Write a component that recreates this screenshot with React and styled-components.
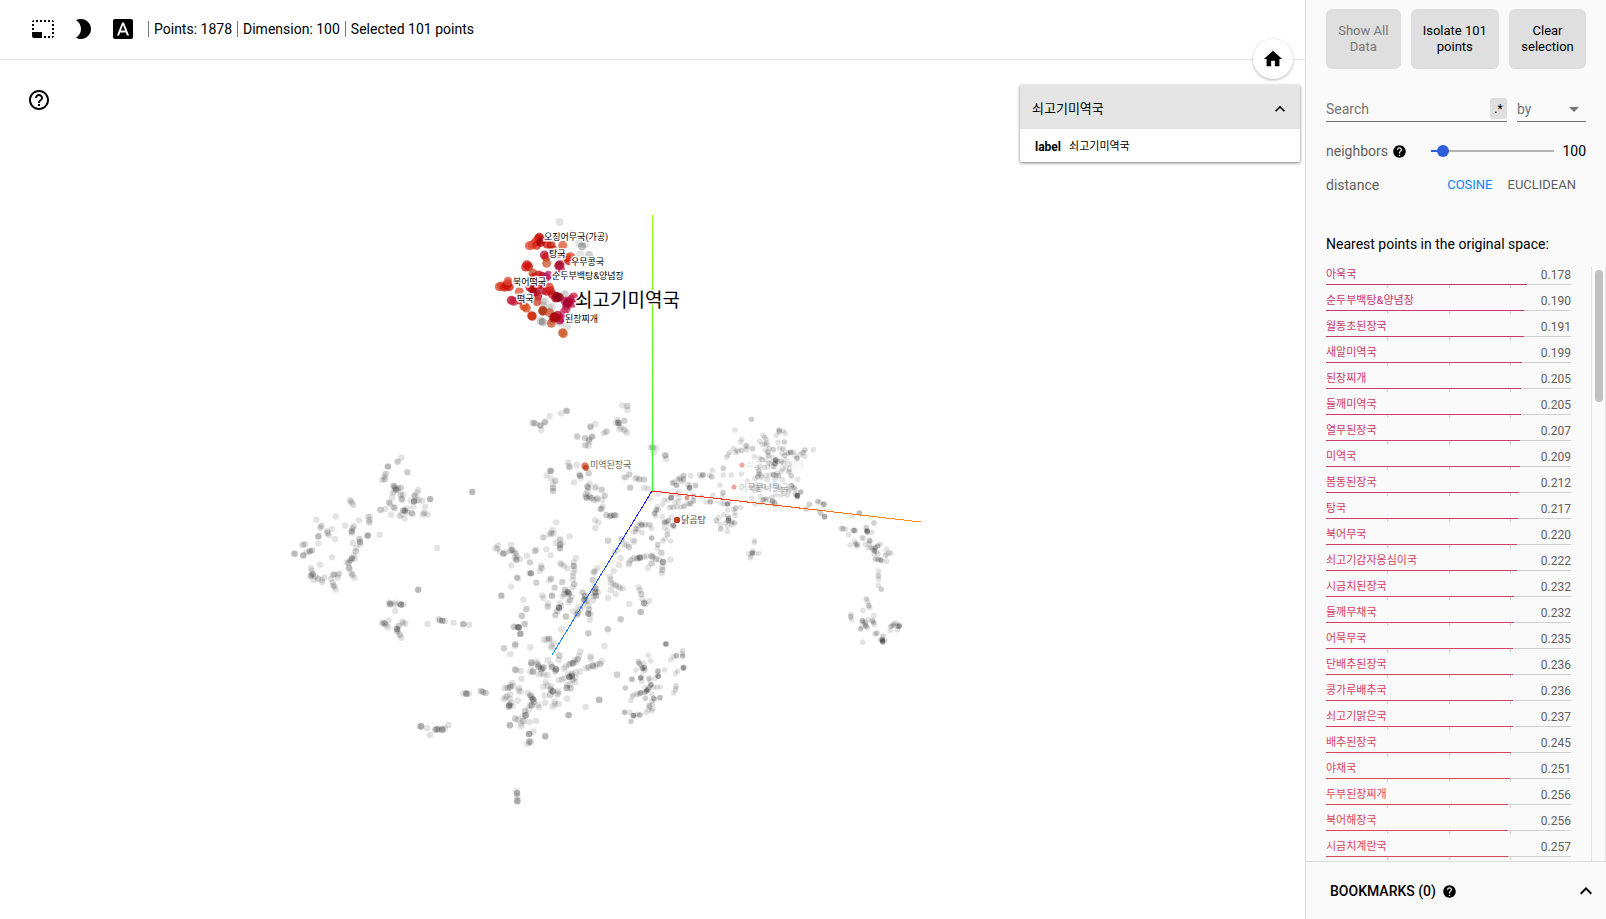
import React, { useState } from "react";
import styled, { createGlobalStyle } from "styled-components";
import {
  MdPhotoSizeSelectSmall,
  MdBrightness2,
  MdFontDownload,
  MdHelpOutline,
  MdHelp,
  MdHome,
  MdExpandLess,
  MdArrowDropDown,
} from "react-icons/md";

const GlobalStyle = createGlobalStyle`
  *, *::before, *::after { box-sizing: border-box; }
  body {
    margin: 0;
    background: #fff;
    color: #000;
    font: 14px/16px Roboto, "Noto Sans CJK KR", sans-serif;
  }
  button, input, select { font: inherit; color: inherit; }
`;

const Page = styled.div`
  display: grid;
  grid-template-columns: minmax(0, 1fr) 301px;
  height: 100vh;
`;

const Main = styled.main`
  position: relative;
  display: flex;
  flex-direction: column;
  min-height: 0;
`;

const Toolbar = styled.header`
  display: flex;
  align-items: center;
  height: 60px;
  padding: 0 0 2px 31px;
  border-bottom: 1px solid #e6e6e6;
`;

const Tools = styled.div`
  display: flex;
  gap: 16px;
  margin-right: 13px;
`;

const IconButton = styled.button`
  display: flex;
  padding: 0;
  border: 0;
  background: none;
  cursor: pointer;
  font-size: ${(p) => p.$size || 24}px;
`;

const Stat = styled.span`
  padding: 0 5px;
  border-left: 1px solid #777;
`;

const HelpButton = styled(IconButton)`
  position: absolute;
  top: 88px;
  left: 27px;
`;

const HomeButton = styled(IconButton)`
  position: absolute;
  top: 39px;
  right: 12px;
  width: 40px;
  height: 40px;
  align-items: center;
  justify-content: center;
  border-radius: 50%;
  background: #fff;
  box-shadow: 0 1px 3px rgba(0, 0, 0, 0.3);
`;

const InfoCard = styled.section`
  position: absolute;
  top: 85px;
  right: 5px;
  width: 280px;
  background: #fff;
  box-shadow: 0 1px 3px rgba(0, 0, 0, 0.5);
`;

const InfoHead = styled.div`
  display: flex;
  align-items: center;
  justify-content: space-between;
  height: 44px;
  padding: 3px 10px 0 12px;
  background: #e5e5e5;
  font-size: 13px;
`;

const InfoRow = styled.dl`
  display: flex;
  gap: 8px;
  margin: 0;
  padding: 10px 15px 7px;
  font-size: 12px;

  dt { font-weight: 700; }
  dd { margin: 0; font-size: 11px; }
`;

const Plot = styled.svg`
  display: block;
  flex: 1;
  width: 100%;
  min-height: 0;
`;

const PointLabel = styled.text`
  font-size: ${(p) => p.$size || 9}px;
  fill: #000;
  fill-opacity: ${(p) => p.$fade || 1};
  stroke: #fff;
  stroke-width: 3px;
  stroke-opacity: ${(p) => p.$fade || 0.9};
  paint-order: stroke;
`;

const Sidebar = styled.aside`
  display: flex;
  flex-direction: column;
  min-height: 0;
  border-left: 1px solid #dcdcdc;
  background: #fafafa;
`;

const Controls = styled.div`
  padding: 9px 20px 0;
`;

const Actions = styled.div`
  display: flex;
  gap: 10px;
`;

const ActionButton = styled.button`
  flex: 1 1 auto;
  height: 60px;
  padding: 0 10px;
  border: 0;
  border-radius: 6px;
  background: #dfdfdf;
  font-size: 13px;
  line-height: 16px;
  cursor: pointer;

  &:disabled { color: #777; cursor: default; }
`;

const SearchRow = styled.div`
  display: flex;
  gap: 10px;
  margin: 27px 0 12px;
`;

const Field = styled.div`
  display: flex;
  align-items: center;
  flex: ${(p) => p.$flex || "none"};
  width: ${(p) => p.$width || "auto"};
  min-width: 0;
  height: 26px;
  border-bottom: 1px solid #707070;
  color: #757575;
`;

const SearchInput = styled.input`
  flex: 1;
  min-width: 0;
  padding: 0;
  border: 0;
  outline: 0;
  background: none;

  &::placeholder { color: #757575; opacity: 1; }
`;

const RegexButton = styled.button`
  width: 17px;
  height: 21px;
  padding: 0;
  border: 0;
  border-radius: 3px;
  background: #dfdfdf;
  color: #000;
  font-size: 12px;
`;

const BySelect = styled.select`
  appearance: none;
  flex: 1;
  min-width: 0;
  padding: 0;
  border: 0;
  outline: 0;
  background: none;
`;

const OptionRow = styled.div`
  display: flex;
  align-items: center;
  height: 34px;
  color: #5f5f5f;
`;

const NeighborLabel = styled.label`
  margin-right: 4px;
`;

const Slider = styled.input`
  appearance: none;
  flex: 1;
  min-width: 0;
  height: 12px;
  margin: 0 2px 0 18px;
  background: linear-gradient(
      to right,
      transparent 6px,
      #2f5fd8 6px 18px,
      #b4b4b4 18px calc(100% - 6px),
      transparent 0
    )
    center / 100% 2px no-repeat;

  &::-webkit-slider-thumb {
    appearance: none;
    width: 12px;
    height: 12px;
    border-radius: 50%;
    background: #2f5fd8;
  }
`;

const SliderValue = styled.output`
  color: #000;
`;

const DistanceButton = styled.button`
  padding: 0;
  border: 0;
  margin-left: ${(p) => (p.$first ? "auto" : "15px")};
  margin-right: ${(p) => (p.$first ? 0 : "10px")};
  background: none;
  font-size: 13px;
  color: ${(p) => (p.$active ? "#0d84ff" : "#5f5f5f")};
`;

const ListTitle = styled.h2`
  margin: 34px 0 14px;
  font-size: 14px;
  font-weight: 400;
  line-height: 17px;
`;

const ListArea = styled.div`
  display: flex;
  flex: 1;
  min-height: 0;
`;

const NeighborList = styled.ul`
  flex: 1;
  margin: 0;
  padding: 0 20px;
  overflow-y: auto;
  scrollbar-width: none;
  list-style: none;
`;

const NeighborItem = styled.li`
  height: 26px;
  font-size: 12px;
`;

const NeighborText = styled.button`
  display: flex;
  align-items: center;
  justify-content: space-between;
  width: 100%;
  height: 17px;
  padding: 0 0 2px;
  border: 0;
  background: none;
  line-height: 14px;
  color: #5f5f5f;
  cursor: pointer;
`;

const NeighborName = styled.span`
  font-size: 11px;
`;

const Bar = styled.div`
  height: 1px;
  background: #d0d0d0;
`;

const BarFill = styled.div`
  height: 1px;
`;

const Ticks = styled.div`
  display: grid;
  grid-template-columns: repeat(4, 1fr);
  height: 3px;

  span + span { border-left: 1px solid #d0d0d0; }
`;

const ScrollTrack = styled.div`
  width: 15px;
  padding: 3px 2px 0 3px;
  border: solid #e4e4e4;
  border-width: 0 1px;
`;

const ScrollThumb = styled.div`
  width: 8px;
  height: 132px;
  border-radius: 4px;
  background: #c1c1c1;
`;

const Bookmarks = styled.footer`
  display: flex;
  align-items: center;
  gap: 6px;
  height: 58px;
  padding: 1px 8px 0 24px;
  border-top: 1px solid #dcdcdc;
  font-weight: 500;

  button { margin-left: auto; }
`;

const NEIGHBORS = [
  ["아욱국", 0.178],
  ["순두부백탕&양념장", 0.19],
  ["월동초된장국", 0.191],
  ["새알미역국", 0.199],
  ["된장찌개", 0.205],
  ["들깨미역국", 0.205],
  ["열무된장국", 0.207],
  ["미역국", 0.209],
  ["봄동된장국", 0.212],
  ["탕국", 0.217],
  ["북어무국", 0.22],
  ["쇠고기감자옹심이국", 0.222],
  ["시금치된장국", 0.232],
  ["들깨무채국", 0.232],
  ["어묵무국", 0.235],
  ["단배추된장국", 0.236],
  ["콩가루배추국", 0.236],
  ["쇠고기맑은국", 0.237],
  ["배추된장국", 0.245],
  ["야채국", 0.251],
  ["두부된장찌개", 0.256],
  ["북어해장국", 0.256],
  ["시금치계란국", 0.257],
];

const neighborColor = (d) => {
  const t = (d - 0.178) / 0.079;
  const mix = (a, b) => Math.round(a + (b - a) * t);
  return `rgb(${mix(196, 220)}, ${mix(52, 70)}, ${mix(112, 90)})`;
};

/* Each cluster: origin, point radius, and "x y [density]" entries in thirds of a unit. */
const CLUSTERS = [
  {
    x: 280, y: 440, r: 3.2,
    pts: `364 53,352 66,354 64,323 79 2,325 80,380 95,384 98,317 102 2,313 110,306 120,314 118 2,341 138 3,345 143 2,349 149 3,362 143 2,355 146,338 158,343 155,362 164 2,370 164,336 173,365 176 2,367 181,327 187 2,331 192,344 204 2,340 201,300 210,303 209,316 207,333 224,370 211 3,375 212 3,381 205,381 217,359 228,364 224,374 235,395 219 2,398 222,400 200,402 184 4,410 182,403 166 2,406 170,415 150,411 157,392 182,417 180,426 182,450 177 2,451 178,435 200,433 219 2,428 224,443 224,577 156 2,576 155,210 180,216 188,220 195,212 184,109 239,167 229,237 241,195 257,264 230,270 230,268 247 2,268 240,124 258 2,120 264,156 267,143 279 2,141 273,147 286,116 288 2,114 291,165 297,115 310,222 258 1,218 265 2,215 274 3,216 280,299 284,264 286 3,261 288,219 309,238 297 2,240 306 3,240 313,229 323,227 334 2,221 347,216 355 3,211 361 2,206 368 2,224 356,200 367,207 383 2,209 387,214 399,217 405 2,224 413,70 313,76 312,68 316,45 341 2,41 341,69 347 2,71 345,80 337,89 334 3,96 331 2,156 352,120 374,93 384,95 392,98 402 3,94 407 2,91 409,106 409,114 416 2,101 420,127 426,126 420,133 412,162 403 2,158 405,178 400,174 404,174 413,153 417,158 427,160 436 2,164 441,167 449,471 324,415 449 2,414 449,327 487,331 491 3,329 494,345 488,346 494,363 494 4,359 490,371 493,346 513,326 541,309 547,314 550 3,306 551,319 556,324 561,367 545,376 551,370 549,356 558 2,351 567 4,352 574 2,359 582,360 586,364 593,443 552,475 537,480 541 2,487 542 3,495 543,521 548,549 552 2,551 553,567 554`,
  },
  {
    x: 480, y: 390, r: 3.2,
    pts: `259 62 2,261 64,243 70,209 78,196 95 2,193 99,162 99 2,168 101,157 99,180 106 2,183 107,184 120,427 46,442 48 2,442 60,346 102,331 109 2,332 113,412 89,408 99,415 98 4,418 103,433 92 2,422 112,418 118,433 118,441 129,434 122,381 124,377 125,371 130,290 138,293 141,337 139 2,335 142,315 144 2,327 149 2,328 155,316 166 2,326 167,264 217,266 227,269 232 2,290 225,316 226,300 257 3,297 253,303 263,282 277,326 250 2,211 242 3,215 244,200 256,213 266,226 273 2,219 283,219 294 2,219 303 2,322 289 2,325 293 2,329 280,348 290,345 293,365 299 2,322 304,374 317 2,318 312,317 320 2,321 324 2,329 319 2,335 324 2,341 330,352 325 2,349 329,367 330,368 350,364 356 2,361 358,379 375 2,390 379 2,394 376 2,403 376 3,409 376,345 391,355 397,346 414,448 253 2,432 262,438 262,471 263,466 266,478 268 2,492 268 2,450 294,451 292,492 294,505 295,518 172 2,512 172,527 174,521 188,556 196 3,558 207,229 397,218 420,213 429 2,208 434,221 431,190 442 2,240 448 2,269 439,228 459,240 464 3,246 460 1,240 475 3,54 466,46 474,52 476,60 485,70 491 3,76 488,93 465,95 480 3,89 483,101 482 1,109 490,110 499,109 509 3,104 504,120 507,94 526,104 490,141 497,165 483 2,169 479,212 496,199 478,150 517 2,183 526,185 534 2,153 550 4,148 549,179 543,111 562 2,114 566,169 578 2,93 590,64 617 3,241 520,244 523,252 527,262 535,288 504,281 517,281 528 3,284 539,280 549,279 558,213 566 2,208 571,247 576 2,224 593 2,279 569,283 583 2,278 592,216 617 3,187 616,190 624,203 650 2,204 640,255 600 2,263 606 4,267 611 3,253 612 2,275 620,270 630 2,265 636,248 619,240 640,237 653 5,244 648,232 663 2,226 675 2,257 679,281 664,291 674 2,294 668 2,130 629,139 657,126 678,135 702,101 711,116 712 3,112 711,121 731 2,206 745,308 607 2,315 618 3,313 629 4,320 634 2,301 658,295 651,309 648,327 658 2,325 671 4,332 673,330 690,341 547 2,345 543,352 534,338 570 2,344 587,347 596 3,346 606 3,348 617 3,341 619,335 610,339 631,354 607,325 730,383 718,422 688,384 624,407 612,390 560,392 568,392 578,399 582,407 586 2,416 590,421 595,429 595,392 600,401 543,417 525,422 504,384 452 2,403 487,410 481,425 447 2,432 462,447 471 2,440 465,463 455,460 451,447 521 2,451 511,457 508,463 504,472 506 2,479 503 4,481 502,492 500,499 499,514 497 2,518 501 2,528 507 2,515 520 2,504 533,537 509,549 516 4,547 530,547 540 2,545 550,544 488 2,571 509,476 592,480 600,484 612 2,487 627,492 639 3,507 633,496 642,482 666 3,448 642`,
  },
  {
    x: 480, y: 390, r: 2.8,
    pts: `510 326,535 312,532 350,529 360 3,524 370 3,527 378,535 359,548 343,553 330,573 323 3,585 338,591 350,602 352,612 348,622 340,633 340,640 333,568 353,574 351,581 353,597 323,547 380,553 397 3,559 395 2,565 392 2,566 403,573 382,580 406 4,582 411,553 413,562 420,562 434 2,555 447,547 453,533 464 2,532 475,515 444 3,572 453,515 415,506 405,496 404 2,484 404 3,480 400,472 406,487 407,468 416 2,474 419,486 428,467 426,459 426,511 404,578 278,589 286 2,600 262,612 257,597 267,611 270,606 275,630 285,628 293 2,646 287,632 257,659 254,670 254 2,688 256,642 320,597 308,587 312,690 335`,
  },
  {
    x: 640, y: 400, r: 2.8,
    pts: `334 58 2,285 90,417 90 2,418 95 2,409 106,430 93,436 100,374 112,378 118,369 106,359 124,305 118,302 126,318 137 2,322 141,338 146 2,280 145,269 157,264 165 1,260 172,290 151,286 157,294 155,305 151 2,320 149,343 170,367 133,380 128,381 135,374 132,388 145,384 156 2,376 151,400 149 2,414 127,433 126 2,418 145,429 147 2,426 160,434 166 2,444 159 2,452 157 3,460 156,471 175 3,465 167,480 164,486 158,495 150 2,491 158,494 169,520 149,387 167,398 173,407 180 5,412 184 3,405 191 4,398 187,389 190 2,378 180,366 179 2,359 174,384 166,424 184 2,430 190,438 180,447 193,384 200 1,401 200 2,373 203,360 199,351 203,357 213 2,357 222 2,353 230 2,345 235,363 226,365 232,378 227,390 225,401 224 3,408 227,412 219,416 227 2,424 214,428 207,437 204,448 208,447 216 2,454 228 2,473 238,427 239,405 237,382 239,250 205 2,217 211,214 229,216 232,250 225,274 225,304 222,188 225,184 230,130 227,131 236,121 240,112 238,102 246,97 250,111 255,143 254,149 264 3,167 257,240 255,322 244,336 255,334 264,347 252,349 261 2,353 269 2,343 273,359 259,370 259 2,380 264,394 258,403 252,409 259,419 262 2,425 270 2,433 280,441 266,447 272 2,454 257 3,462 263 2,465 268,467 283 2,472 287 6,472 292,482 276 3,442 285,407 285,423 286,395 292,361 290,370 300 3,377 297 2,386 299,398 303 3,395 310,404 308 2,409 315,362 310,345 311,335 294,249 278 2,248 288,219 286,212 305 2,198 306,185 290,160 302,149 312 2,132 320,159 287,94 293 2,83 300,115 305,262 312 4,253 312,268 309,287 324 2,302 323,281 328,263 330,285 337,243 309,251 344,263 349,266 355 3,265 362 4,275 366 2,257 369,284 369 2,275 373,229 362 2,236 353,242 387 2,241 374,262 395,263 379,285 347,499 327 2,508 313 2,534 303,533 306,551 313 2,541 338,553 350 2`,
  },
  {
    x: 820, y: 500, r: 2.8,
    pts: `0 7,12 13 2,2 40,14 50 2,118 39 3,97 48,162 69 2,63 86,69 86 2,77 88,86 104,102 91 2,105 92 2,98 91,139 83 2,141 93 5,142 97 2,155 97,126 113,130 115,148 121 2,151 124,104 124,107 132 2,113 134 2,90 135,110 139,136 133,145 144,148 131,153 142,159 146 2,166 143 2,173 138 3,181 132,163 152 3,170 156,162 161,174 162,166 178 2,174 178 2,182 180 3,186 183,200 148,199 163,207 158,213 160,197 167,200 184,176 213,175 227 2,176 238,175 256,184 268 2,139 297 2,144 306,146 317 2,149 322,129 331,93 343,92 350 2,95 359,161 347,127 362 3,129 366,135 372 2,138 378 3,136 366,142 384,125 382,121 387 2,145 359,157 362 2,161 367 2,163 374,165 402,169 401,172 398,128 427,189 409 2,187 420 4,188 425 5,181 419,195 421,211 391,213 379 2,219 376 2,222 371,229 370,232 377,237 379 4,232 389,240 375`,
  },
  {
    x: 640, y: 400, r: 2.7,
    pts: `344 422,343 428,338 452,337 459 4,345 460,326 461,333 468,331 474,357 460`,
  },
  {
    x: 400, y: 600, r: 3.3,
    pts: `365 47,379 28,373 72,343 80,356 82 3,361 102 2,346 133 2,345 137,312 145 2,331 162,391 142,440 119,432 119,448 117 2,461 130,454 137,455 144,484 88,565 100,613 138,662 58,624 88,498 50 1,566 16,345 209 2,349 210,362 213,364 236,394 188 3,395 195 1,399 215 3,391 215,409 185,413 192 2,416 200 3,424 207 3,430 203 3,424 220,417 223,444 180,453 193,456 201 3,468 208 4,466 214 2,433 224,443 226,476 180,478 167 2,477 240,486 238,492 206,497 200,508 193 2,514 190,519 190 3,524 180,528 186,533 178 2,537 168,541 155,504 223,516 222 2,508 231 4,515 228 3,518 239 2,494 235,526 232,527 218,540 215,526 246,571 169,573 176,558 205,566 202 2,578 197 3,585 200,590 193,600 192 2,605 184,501 296,501 255 1,500 264 3,512 265 2,509 254,437 247,442 257,430 261,453 260,452 268 2,458 274 4,451 284 2,475 274,474 280,434 287,472 284,435 309,464 305,458 320,475 312,465 313,384 279,391 286 2,394 291 2,399 298 4,402 305 2,395 316 3,389 316,414 315,417 322,386 329,375 333 2,377 346 4,368 350,370 363 2,363 370,364 379,388 366,408 363,337 249,331 256,323 264 2,331 262 2,314 264,339 258,357 264,356 272,362 275,331 283,321 289,316 292,312 297,330 297,353 302,333 308,328 316 4,326 320 2,337 318,346 356 2,354 359,330 376 2,329 376,400 395,387 402 3,388 402,388 425 3,393 428,382 432,436 409 2,435 409,507 345 2,504 346,557 321,598 300 2,597 299,651 224 2,190 280,199 281 4,206 281,243 273 2,249 276 2,257 279 2,62 379 3,64 380,81 384,90 405,106 389 2,111 388 3,117 388,127 389 4,134 385,145 375,350 574,351 580 3,352 589,352 602 3,352 606`,
  },
  {
    x: 400, y: 600, r: 2.8,
    pts: `798 132 4,796 132,848 152,847 160,848 168 3,829 167 3,820 170,812 180,851 203 4,849 205,833 213,827 221,745 166,752 183,715 185 2,718 191 2,723 198,727 205 3,733 203 3,736 209,731 190,708 210,794 210,774 213 3,771 223,775 229 4,765 235,722 234 4,725 230,731 213,697 238 2,693 237,725 244,747 235 2,750 243,753 255 4,760 262,748 262,744 268 3,740 273 4,735 277 2,723 278 3,719 280,714 285,710 281,736 263,781 261,771 262,676 264 2,828 257,828 264,826 271,821 279,697 289,700 285,693 301,736 295 2,756 282,761 295 3,764 298,780 293 3,755 305,747 317 2,749 322,758 313 1,759 327 1,755 332,745 330,674 337 3,690 337,700 347 4,704 346,713 343,720 345 3,738 337,692 363,694 366`,
  },
  {
    x: 480, y: 200, r: 4,
    pts: `239 66,273 102,297 130,306 139 3,316 132,327 165 2,300 163,258 115,254 283 2,188 305,208 324,216 320,190 318,182 363 2,188 366 3,216 362 2,241 370,262 378,196 303`,
  },
];

const RED = "#c8140a";
/* x, y, colour for the selected points, in thirds of a unit from (480, 200) */
const SELECTED = [
  [178, 112, "#b80000"], [174, 117, RED], [187, 119, RED], [166, 127, "#e03018"],
  [156, 135, "#e03a20"], [148, 137, "#e04a30"], [170, 136, "#d82010"], [182, 127, "#a80000"],
  [201, 132, RED], [213, 135, RED], [248, 136, "#e05030"], [193, 165, "#b01040"], [199, 171, RED],
  [200, 190, "#c85020"], [220, 150, RED], [236, 160, "#d02018"], [261, 173, "#d82818"],
  [266, 182, RED], [272, 170, "#e04020"], [240, 194, "#a00020"], [236, 197, "#a00828"],
  [241, 206, "#b81840"], [141, 194, "#c80808"], [137, 201, "#d81010"], [146, 200, RED],
  [159, 220, "#c04a20"], [176, 225, RED], [186, 229, "#b80828"], [198, 232, "#b01858"],
  [205, 226, "#b81860"], [162, 232, RED], [58, 260, "#d84020"], [65, 258, "#d83818"],
  [74, 262, "#d02010"], [84, 251, "#c00808"], [80, 257, "#c80808"], [88, 260, RED],
  [84, 244, "#e04830"], [118, 275, "#e04a30"], [158, 268, "#a80008"], [165, 276, "#a00008"],
  [150, 262, "#b00010"], [178, 254, RED], [189, 270, "#b80828"], [200, 274, "#c81828"],
  [211, 272, "#c81010"], [208, 262, "#d82820"], [217, 283, RED], [173, 289, "#b80818"],
  [94, 301, "#b80020"], [102, 304, "#c81838"], [171, 305, "#d03828"], [132, 319, "#d83810"],
  [139, 324, "#d84818"], [120, 300, RED], [155, 347, "#c82000"], [157, 349, "#d02808"],
  [230, 289, "#880010"], [233, 293, "#880008"], [227, 294, "#a00018"], [238, 292, "#900018"],
  [188, 331, "#b83818"], [189, 334, "#a83010"], [209, 338, "#d04828"], [214, 370, "#c85028"],
  [239, 360, "#b81048"], [243, 355, "#b81040"], [252, 337, "#c83060"], [258, 327, "#c83060"],
  [223, 350, "#980000"], [228, 352, "#980010"], [221, 354, "#b00808"], [233, 346, "#b00820"],
  [274, 298, "#c01040"], [281, 291, "#c81840"], [278, 310, "#c02040"], [256, 304, "#b80840"],
  [261, 316, "#b01040"], [262, 309, "#a00028"], [266, 306, "#a80038"],
  [248, 398, "#c85020"], [250, 401, "#d06030"],
];

const OUTLIERS = [
  [585, 466, 3.6, "#dc5a30", 0.8], [586, 468, 3, "#b83010", 0.7], [677, 520, 3.3, "#b83008", 0.9],
  [687, 498, 2.4, "#d07050", 0.7], [742, 465, 2.6, "#e85a50", 0.55], [734, 487, 2.6, "#e85a50", 0.55],
];

const LABELS = [
  [544, 240, "오징어무국(가공)"], [549, 257, "탕국"], [571, 265, "우무콩국"],
  [552, 279, "순두부백탕&양념장"], [513, 285, "북어떡국"], [517, 302, "떡국"],
  [565, 322, "된장찌개"], [590, 468, "미역된장국", 9, 0.7], [681, 523, "닭곰탕", 9, 0.8],
  [746, 468, "쇠고기김치찌개", 9, 0.12], [739, 491, "어묵콩나물국", 9, 0.3],
];

const parsePoints = (pts) => pts.split(",").map((p) => p.trim().split(" ").map(Number));

function Cluster({ x, y, r, pts }) {
  return (
    <g fill="#000">
      {parsePoints(pts).map(([px, py, n = 1], i) => (
        <circle key={i} cx={x + px / 3} cy={y + py / 3} r={r} fillOpacity={0.11 + (n - 1) * 0.075} />
      ))}
    </g>
  );
}

function ScatterPlot() {
  return (
    <Plot viewBox="0 60 1305 859" role="img" aria-label="Embedding projection">
      <defs>
        <linearGradient id="axisX" gradientUnits="userSpaceOnUse" x1="652" y1="491" x2="921" y2="522">
          <stop offset="0" stopColor="#ff1a10" />
          <stop offset="1" stopColor="#ff9a10" />
        </linearGradient>
        <linearGradient id="axisY" gradientUnits="userSpaceOnUse" x1="652" y1="491" x2="652" y2="215">
          <stop offset="0" stopColor="#20ff20" />
          <stop offset="1" stopColor="#99ff10" />
        </linearGradient>
        <linearGradient id="axisZ" gradientUnits="userSpaceOnUse" x1="652" y1="491" x2="552" y2="655">
          <stop offset="0" stopColor="#2010ff" />
          <stop offset="1" stopColor="#1090ff" />
        </linearGradient>
      </defs>
      {CLUSTERS.map((c, i) => (
        <Cluster key={i} {...c} />
      ))}
      <g shapeRendering="crispEdges">
        <path d="M652 491 L921 522" stroke="url(#axisX)" />
        <rect x="652" y="215" width="1" height="276" fill="url(#axisY)" />
        <path d="M652 491 L552 655" stroke="url(#axisZ)" />
      </g>
      {SELECTED.map(([px, py, fill], i) => (
        <circle key={i} cx={480 + px / 3} cy={200 + py / 3} r="4.5" fill={fill} fillOpacity="0.75" />
      ))}
      {OUTLIERS.map(([cx, cy, r, fill, o], i) => (
        <circle key={i} cx={cx} cy={cy} r={r} fill={fill} fillOpacity={o} />
      ))}
      {LABELS.map(([x, y, text, size, fade]) => (
        <PointLabel key={text} x={x} y={y} $size={size} $fade={fade}>
          {text}
        </PointLabel>
      ))}
      <PointLabel x="575" y="307" $size={19}>
        쇠고기미역국
      </PointLabel>
    </Plot>
  );
}

function Neighbor({ name, distance }) {
  const color = neighborColor(distance);
  return (
    <NeighborItem>
      <NeighborText>
        <NeighborName style={{ color }}>{name}</NeighborName>
        <span>{distance.toFixed(3)}</span>
      </NeighborText>
      <Bar>
        <BarFill style={{ width: `${(1 - distance) * 100}%`, background: color }} />
      </Bar>
      <Ticks>
        <span />
        <span />
        <span />
        <span />
      </Ticks>
    </NeighborItem>
  );
}

export default function App() {
  const [neighbors, setNeighbors] = useState(100);
  const [metric, setMetric] = useState("cosine");
  return (
    <Page>
      <GlobalStyle />
      <Main>
        <Toolbar>
          <Tools>
            <IconButton aria-label="Bounding box selection"><MdPhotoSizeSelectSmall /></IconButton>
            <IconButton aria-label="Night mode"><MdBrightness2 /></IconButton>
            <IconButton aria-label="3D labels"><MdFontDownload /></IconButton>
          </Tools>
          <Stat>Points: 1878</Stat>
          <Stat>Dimension: 100</Stat>
          <Stat>Selected 101 points</Stat>
        </Toolbar>
        <ScatterPlot />
        <HelpButton aria-label="Help"><MdHelpOutline /></HelpButton>
        <HomeButton $size={22} aria-label="Reset view"><MdHome /></HomeButton>
        <InfoCard>
          <InfoHead>
            <span>쇠고기미역국</span>
            <IconButton $size={20} aria-label="Collapse"><MdExpandLess /></IconButton>
          </InfoHead>
          <InfoRow>
            <dt>label</dt>
            <dd>쇠고기미역국</dd>
          </InfoRow>
        </InfoCard>
      </Main>
      <Sidebar>
        <Controls>
          <Actions>
            <ActionButton disabled>Show All<br />Data</ActionButton>
            <ActionButton>Isolate 101<br />points</ActionButton>
            <ActionButton>Clear<br />selection</ActionButton>
          </Actions>
          <SearchRow>
            <Field $flex="1">
              <SearchInput placeholder="Search" aria-label="Search" />
              <RegexButton aria-label="Regex mode">.*</RegexButton>
            </Field>
            <Field $width="69px">
              <BySelect aria-label="Search by"><option>by</option></BySelect>
              <MdArrowDropDown size={24} />
            </Field>
          </SearchRow>
          <OptionRow>
            <NeighborLabel htmlFor="neighbors">neighbors</NeighborLabel>
            <MdHelp size={15} color="#000" />
            <Slider
              id="neighbors"
              type="range"
              min="5"
              max="999"
              value={neighbors}
              onChange={(e) => setNeighbors(Number(e.target.value))}
            />
            <SliderValue htmlFor="neighbors">{neighbors}</SliderValue>
          </OptionRow>
          <OptionRow>
            <span>distance</span>
            <DistanceButton $first $active={metric === "cosine"} onClick={() => setMetric("cosine")}>
              COSINE
            </DistanceButton>
            <DistanceButton $active={metric === "euclidean"} onClick={() => setMetric("euclidean")}>
              EUCLIDEAN
            </DistanceButton>
          </OptionRow>
          <ListTitle>Nearest points in the original space:</ListTitle>
        </Controls>
        <ListArea>
          <NeighborList>
            {NEIGHBORS.map(([name, distance]) => (
              <Neighbor key={name} name={name} distance={distance} />
            ))}
          </NeighborList>
          <ScrollTrack>
            <ScrollThumb />
          </ScrollTrack>
        </ListArea>
        <Bookmarks>
          <span>BOOKMARKS (0)</span>
          <MdHelp size={15} />
          <IconButton $size={24} aria-label="Expand bookmarks"><MdExpandLess /></IconButton>
        </Bookmarks>
      </Sidebar>
    </Page>
  );
}
